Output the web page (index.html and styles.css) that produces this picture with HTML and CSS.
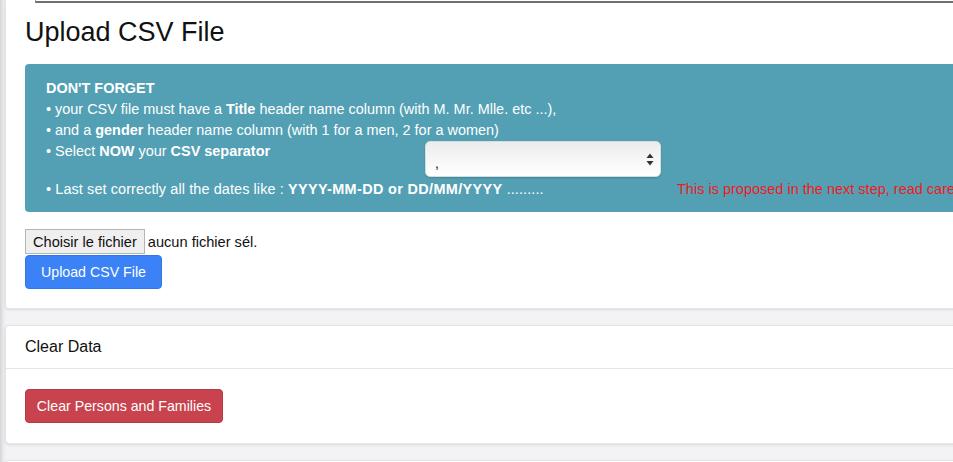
FILE: index.html
```html
<!DOCTYPE html>
<html lang="fr">
<head>
<meta charset="utf-8">
<title>Upload CSV File</title>
<link rel="stylesheet" href="styles.css">
</head>
<body>
<div class="page">
  <section class="card card-first">
    <div class="card-body">
      <div class="top-rule"></div>
      <h2 class="title">Upload CSV File</h2>
      <div class="alert">
        <div class="line"><b>DON'T FORGET</b></div>
        <div class="line">• your CSV file must have a <b>Title</b> header name column (with M. Mr. Mlle. etc ...),</div>
        <div class="line">• and a <b>gender</b> header name column (with 1 for a men, 2 for a women)</div>
        <div class="sep-grid">
          <div class="line">• Select <b>NOW</b> your <b>CSV separator</b></div>
          <div class="select-wrap">
            <select class="select">
              <option>,</option>
              <option>;</option>
            </select>
            <svg class="select-arrows" width="8" height="13" viewBox="0 0 8 13"><path d="M4 0.5L7.5 5H0.5Z" fill="#333"/><path d="M4 12.5L7.5 8H0.5Z" fill="#333"/></svg>
          </div>
          <div></div>
          <div class="line span2">• Last set correctly all the dates like : <b>YYYY-MM-DD or DD/MM/YYYY</b> .........</div>
          <div class="line warn">This is proposed in the next step, read carefully</div>
        </div>
      </div>
      <div class="file-row">
        <span class="file-btn">Choisir le fichier</span>
        <span class="file-name">aucun fichier sél.</span>
      </div>
      <button class="btn btn-primary">Upload CSV File</button>
    </div>
  </section>

  <section class="card">
    <div class="card-header">Clear Data</div>
    <div class="card-body padded">
      <button class="btn btn-danger">Clear Persons and Families</button>
    </div>
  </section>

  <section class="card card-last">
    <div class="card-header">&nbsp;</div>
  </section>
</div>
</body>
</html>
```
FILE: styles.css
```css
html, body {
  margin: 0;
  padding: 0;
  overflow: hidden;
}
body {
  font-family: "Liberation Sans", Arial, sans-serif;
  color: #111;
  background: linear-gradient(90deg, #d4d4d6 0px, #e9e9eb 3px, #f3f3f5 6px);
  height: 462px;
}
.page {
  width: 1400px;
  padding-left: 5px;
  display: flex;
  flex-direction: column;
  gap: 16px;
}
.card {
  background: #fff;
  border: 1px solid #e4e5e8;
  border-radius: 4px;
  box-shadow: 0 1px 3px rgba(0,0,0,0.10);
}
.card-first {
  border-top: none;
  border-top-left-radius: 0;
  border-top-right-radius: 0;
}
.card-body {
  padding: 0 19px 19px 19px;
}
.card-body.padded {
  padding: 20px 19px 20px 19px;
}
.top-rule {
  margin-left: 10px;
  height: 1px;
  border-left: 1px solid #999;
  border-bottom: 2px solid #6f6f6f;
}
.title {
  font-size: 27px;
  font-weight: normal;
  line-height: 32px;
  margin: 13px 0 16px 0;
  color: #111;
}
.alert {
  background: #53a0b5;
  color: #fff;
  border-radius: 4px;
  padding: 14px 21px 12px 21px;
  font-size: 14.45px;
  line-height: 21px;
}
.line {
  white-space: nowrap;
}
.sep-grid {
  display: grid;
  grid-template-columns: 379px 252px 1fr;
  align-items: start;
}
.span2 {
  grid-column: 1 / span 2;
  margin-top: 2px;
  letter-spacing: 0.1px;
}
.span2 b {
  letter-spacing: 0.35px;
}
.warn {
  margin-top: 2px;
  color: #f01a1e;
  font-size: 14.5px;
}
.select-wrap {
  position: relative;
  width: 236px;
  height: 36px;
}
.select {
  appearance: none;
  -webkit-appearance: none;
  width: 236px;
  height: 36px;
  border: 1px solid #d8dde0;
  border-radius: 5px;
  background: linear-gradient(#ececec 0%, #f6f6f6 50%, #ffffff 100%);
  box-shadow: 0 1px 2px rgba(0,0,0,0.18);
  font-family: "Liberation Sans", Arial, sans-serif;
  font-size: 14px;
  color: #111;
  padding: 8px 10px 0 9px;
  margin: 0;
}
.select-arrows {
  position: absolute;
  right: 7px;
  top: 12px;
  pointer-events: none;
}
.file-row {
  margin-top: 17px;
  display: flex;
  align-items: center;
  height: 25px;
  font-size: 14.6px;
}
.file-btn {
  display: inline-flex;
  align-items: center;
  height: 23px;
  padding: 0 7px;
  background: #efefef;
  border: 1px solid #b5b5b5;
  color: #111;
}
.file-name {
  margin-left: 3px;
  color: #111;
}
.btn {
  display: inline-flex;
  align-items: center;
  justify-content: center;
  border-radius: 4px;
  color: #fff;
  font-family: "Liberation Sans", Arial, sans-serif;
  font-size: 14.2px;
  height: 34px;
  padding: 0;
  margin-top: 1px;
  white-space: nowrap;
  cursor: pointer;
}
.btn-primary {
  background: #3b82f6;
  border: 1px solid #2f78ea;
  width: 137px;
}
.btn-danger {
  background: #c8434d;
  border: 1px solid #b83a44;
  width: 198px;
  margin-top: 0;
}
.card-header {
  padding: 12px 19px;
  font-size: 16px;
  line-height: 18px;
  border-bottom: 1px solid #e4e5e8;
}
.card-last {
  height: 60px;
}
```
